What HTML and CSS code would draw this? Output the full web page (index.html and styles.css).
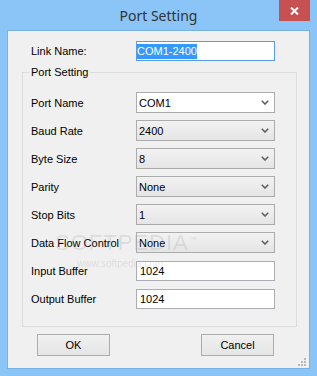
FILE: index.html
```html
<!DOCTYPE html>
<html>
<head>
<meta charset="utf-8">
<link rel="stylesheet" href="styles.css">
</head>
<body>
<div class="window">
  <div class="titlebar">
    <span class="title">Port Setting</span>
    <button class="close" aria-label="Close">
      <svg width="9" height="8" viewBox="0 0 9 8"><path d="M1 0.5 L8 7.5 M8 0.5 L1 7.5" stroke="#fff" stroke-width="2" fill="none"/></svg>
    </button>
  </div>
  <div class="client">
    <div class="row link-row">
      <span class="lbl">Link Name:</span>
      <div class="field focus"><span class="sel">COM1-2400</span></div>
    </div>
    <div class="group">
      <span class="legend">Port Setting</span>
      <div class="rows">
        <div class="row"><span class="lbl">Port Name</span><div class="field combo white"><span>COM1</span><svg class="chev" width="8" height="5" viewBox="0 0 8 5"><path d="M0.8 0.8 L4 4 L7.2 0.8" stroke="#5f5f5f" stroke-width="1.6" fill="none"/></svg></div></div>
        <div class="row"><span class="lbl">Baud Rate</span><div class="field combo"><span>2400</span><svg class="chev" width="8" height="5" viewBox="0 0 8 5"><path d="M0.8 0.8 L4 4 L7.2 0.8" stroke="#5f5f5f" stroke-width="1.6" fill="none"/></svg></div></div>
        <div class="row"><span class="lbl">Byte Size</span><div class="field combo"><span>8</span><svg class="chev" width="8" height="5" viewBox="0 0 8 5"><path d="M0.8 0.8 L4 4 L7.2 0.8" stroke="#5f5f5f" stroke-width="1.6" fill="none"/></svg></div></div>
        <div class="row"><span class="lbl">Parity</span><div class="field combo"><span>None</span><svg class="chev" width="8" height="5" viewBox="0 0 8 5"><path d="M0.8 0.8 L4 4 L7.2 0.8" stroke="#5f5f5f" stroke-width="1.6" fill="none"/></svg></div></div>
        <div class="row"><span class="lbl">Stop Bits</span><div class="field combo"><span>1</span><svg class="chev" width="8" height="5" viewBox="0 0 8 5"><path d="M0.8 0.8 L4 4 L7.2 0.8" stroke="#5f5f5f" stroke-width="1.6" fill="none"/></svg></div></div>
        <div class="row"><span class="lbl">Data Flow Control</span><div class="field combo"><span>None</span><svg class="chev" width="8" height="5" viewBox="0 0 8 5"><path d="M0.8 0.8 L4 4 L7.2 0.8" stroke="#5f5f5f" stroke-width="1.6" fill="none"/></svg></div></div>
        <div class="row"><span class="lbl">Input Buffer</span><div class="field text"><span>1024</span></div></div>
        <div class="row"><span class="lbl">Output Buffer</span><div class="field text"><span>1024</span></div></div>
      </div>
    </div>
    <div class="buttons">
      <button class="btn">OK</button>
      <button class="btn">Cancel</button>
    </div>
    <svg class="grip" width="8" height="8" viewBox="0 0 8 8" fill="#b9b9b9">
      <rect x="6" y="0" width="2" height="2"/>
      <rect x="3" y="3" width="2" height="2"/><rect x="6" y="3" width="2" height="2"/>
      <rect x="0" y="6" width="2" height="2"/><rect x="3" y="6" width="2" height="2"/><rect x="6" y="6" width="2" height="2"/>
    </svg>
  </div>
  <div class="wm wm-big">SOFTPEDIA<sup>™</sup></div>
  <div class="wm wm-small">www.softpedia.com</div>
</div>
</body>
</html>
```
FILE: styles.css
```css
html, body {
  margin: 0;
  padding: 0;
}
.window {
  position: relative;
  width: 317px;
  height: 376px;
  box-sizing: border-box;
  background: #8bc4f7;
  padding: 0 7px 7px;
  display: flex;
  flex-direction: column;
  font-family: "Liberation Sans", Arial, sans-serif;
  font-size: 11px;
  color: #000;
}
.titlebar {
  height: 30px;
  flex: none;
  display: flex;
  align-items: center;
  justify-content: center;
}
.title {
  font-family: "Noto Sans", "Open Sans", sans-serif;
  font-size: 14px;
  color: #333;
}
.close {
  position: absolute;
  top: 0;
  right: 7px;
  width: 31px;
  height: 21px;
  padding: 0;
  border: 0;
  background: #c75050;
  display: flex;
  align-items: center;
  justify-content: center;
}
.client {
  position: relative;
  flex: 1;
  background: #f0f0f0;
  border: 1px solid #78b0e2;
  padding-top: 10px;
  display: flex;
  flex-direction: column;
}
.row {
  display: flex;
  align-items: center;
  height: 21px;
}
.link-row {
  height: 20px;
  padding-left: 23px;
}
.lbl {
  width: 105px;
  flex: none;
  white-space: nowrap;
}
.field {
  width: 139px;
  height: 21px;
  box-sizing: border-box;
  border: 1px solid #acacac;
  display: flex;
  align-items: center;
  padding-left: 2px;
  white-space: nowrap;
}
.field.focus {
  height: 20px;
  border-color: #569de5;
  background: #fff;
  padding-left: 0;
}
.sel {
  background: #3399ff;
  color: #fff;
  line-height: 15px;
}
.group {
  position: relative;
  margin: 11px 12px 0 14px;
  border: 1px solid #dcdcdc;
  padding: 19px 0 17px 8px;
}
.legend {
  position: absolute;
  top: -7px;
  left: 6px;
  padding: 0 2px;
  line-height: 13px;
  background: #f0f0f0;
}
.rows {
  display: flex;
  flex-direction: column;
  gap: 7px;
}
.combo {
  justify-content: space-between;
  padding-right: 5px;
  background: linear-gradient(#f2f2f2, #e5e5e5);
}
.combo.white {
  background: #fff;
}
.chev {
  display: block;
}
.field.text {
  height: 20px;
  align-self: flex-end;
  background: #fff;
  border-color: #abadb3;
  padding-left: 3px;
}
.buttons {
  display: flex;
  justify-content: space-between;
  margin-top: 7px;
  padding: 0 35px 0 29px;
}
.btn {
  width: 73px;
  height: 22px;
  padding: 0;
  border: 1px solid #acacac;
  background: linear-gradient(#f0f0f0, #e5e5e5);
  font-family: "Liberation Sans", Arial, sans-serif;
  font-size: 11px;
  color: #000;
}
.grip {
  position: absolute;
  right: 3px;
  bottom: 2px;
}
.wm {
  position: absolute;
  pointer-events: none;
  color: rgba(150, 150, 150, 0.22);
  white-space: nowrap;
}
.wm-big {
  left: 55px;
  top: 228px;
  font-size: 22px;
  letter-spacing: 1px;
  line-height: 24px;
}
.wm-big sup {
  font-size: 8px;
}
.wm-small {
  left: 77px;
  top: 258px;
  font-size: 10px;
  line-height: 12px;
}
```
